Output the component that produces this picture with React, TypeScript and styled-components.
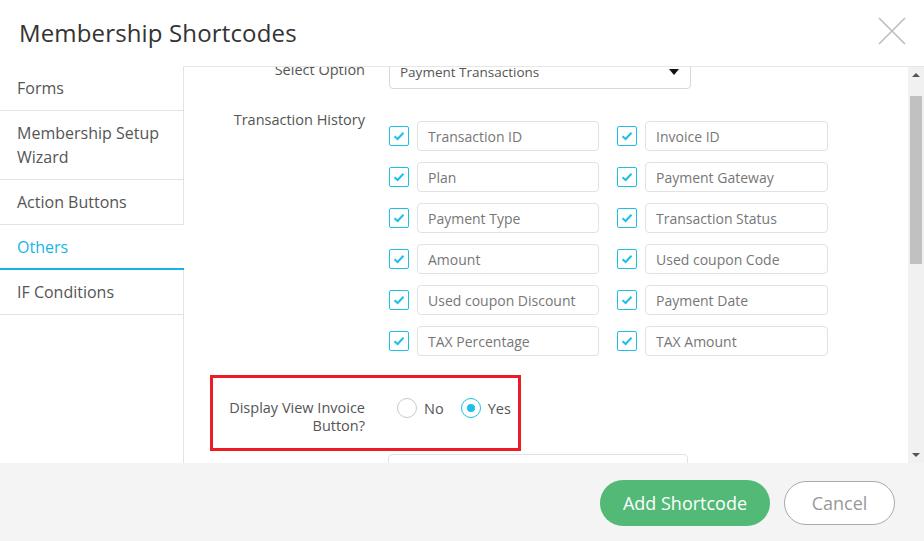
import React from "react";
import styled, { createGlobalStyle } from "styled-components";

const Global = createGlobalStyle`
  html, body { margin: 0; padding: 0; background: #fff; }
  body { font-family: "Open Sans", "Liberation Sans", sans-serif; }
  * { box-sizing: border-box; }
`;

const Modal = styled.div`
  width: 924px;
  height: 541px;
  display: flex;
  flex-direction: column;
  background: #fff;
  overflow: hidden;
`;

const Header = styled.div`
  height: 67px;
  flex: none;
  display: flex;
  align-items: center;
  justify-content: space-between;
  padding: 0 18px 0 19px;
  border-bottom: 1px solid #e6e6e6;
`;

const Title = styled.h1`
  margin: 0 0 2px;
  font-size: 24px;
  font-weight: 400;
  color: #333;
  letter-spacing: 0.15px;
`;

const Close = styled.button`
  width: 28px;
  height: 28px;
  padding: 0;
  border: 0;
  background: none;
  display: flex;
  margin-top: -4px;
`;

const Body = styled.div`
  flex: 1;
  display: flex;
  min-height: 0;
`;

const Sidebar = styled.nav`
  width: 184px;
  flex: none;
  border-right: 1px solid #e3e3e3;
  display: flex;
  flex-direction: column;
`;

const NavItem = styled.div<{ $active?: boolean }>`
  padding: ${(p) => (p.$active ? "10px 17px 9px" : "10px 17px")};
  font-size: 16px;
  line-height: 24px;
  color: ${(p) => (p.$active ? "#16b5e8" : "#555")};
  border-bottom: ${(p) => (p.$active ? "2px solid #16b5e8" : "1px solid #e3e3e3")};
  background: #fff;
  margin-right: ${(p) => (p.$active ? "-1px" : "0")};
  &:first-child {
    margin-top: -1px;
  }
`;

const Content = styled.div`
  flex: 1;
  overflow: hidden;
`;

const Inner = styled.div`
  margin-top: -13px;
  padding-left: 26px;
  display: flex;
  flex-direction: column;
`;

const Row = styled.div<{ $mt?: number }>`
  display: flex;
  align-items: flex-start;
  margin-top: ${(p) => p.$mt ?? 0}px;
  position: relative;
`;

const Label = styled.div<{ $pt?: number }>`
  width: 155px;
  flex: none;
  text-align: right;
  font-size: 14.5px;
  line-height: 20px;
  color: #555;
  padding-top: ${(p) => p.$pt ?? 0}px;
`;

const Controls = styled.div<{ $pt?: number }>`
  margin-left: 24px;
  padding-top: ${(p) => p.$pt ?? 0}px;
`;

const Select = styled.div`
  width: 302px;
  height: 35px;
  border: 1px solid #d3d8dd;
  border-radius: 4px;
  display: flex;
  align-items: center;
  justify-content: space-between;
  padding: 0 11px 0 10px;
  font-size: 13.5px;
  color: #555;
`;

const Caret = styled.span`
  width: 0;
  height: 0;
  border-left: 5px solid transparent;
  border-right: 5px solid transparent;
  border-top: 6px solid #111;
`;

const Grid = styled.div`
  display: grid;
  grid-template-columns: 210px 211px;
  column-gap: 18px;
  row-gap: 11px;
`;

const Cell = styled.div`
  display: flex;
  align-items: center;
  gap: 8px;
`;

const Check = styled.span`
  width: 20px;
  height: 20px;
  flex: none;
  border: 1.5px solid #1cc0e6;
  border-radius: 2px;
  display: flex;
  align-items: center;
  justify-content: center;
`;

const TextBox = styled.div<{ $w?: number }>`
  width: ${(p) => p.$w ?? 182}px;
  height: 30px;
  border: 1px solid #dde3e8;
  border-radius: 4px;
  display: flex;
  align-items: center;
  padding-left: 10px;
  font-size: 14px;
  color: #777;
`;

const TwoLine = styled(Label)`
  line-height: 18px;
`;

const Radios = styled.div`
  display: flex;
  align-items: center;
  margin-left: 32px;
  margin-top: -1px;
`;

const RadioOpt = styled.label`
  display: flex;
  align-items: center;
  gap: 7px;
  font-size: 14.5px;
  color: #555;
  margin-right: 17px;
`;

const RadioCircle = styled.span<{ $on?: boolean }>`
  width: 20px;
  height: 20px;
  border-radius: 50%;
  border: 1px solid ${(p) => (p.$on ? "#1cc0e6" : "#c8c8c8")};
  display: flex;
  align-items: center;
  justify-content: center;
  &::after {
    content: "";
    width: 8px;
    height: 8px;
    border-radius: 50%;
    background: ${(p) => (p.$on ? "#1cc0e6" : "transparent")};
  }
`;

const Highlight = styled.div`
  position: absolute;
  left: 0;
  top: -24px;
  width: 311px;
  height: 76px;
  border: 3px solid #ed1c24;
  pointer-events: none;
`;

const BigBox = styled.div`
  width: 300px;
  height: 34px;
  border: 1px solid #dde3e8;
  border-radius: 4px;
  margin-left: -1px;
`;

const Scrollbar = styled.div`
  width: 16px;
  flex: none;
  background: #f1f1f1;
  display: flex;
  flex-direction: column;
  align-items: center;
`;

const Arrow = styled.span<{ $down?: boolean }>`
  width: 0;
  height: 0;
  margin: 6px 0;
  border-left: 4px solid transparent;
  border-right: 4px solid transparent;
  ${(p) => (p.$down ? "border-top: 4px solid #555;" : "border-bottom: 4px solid #555;")}
`;

const Thumb = styled.div`
  width: 12px;
  height: 168px;
  background: #c1c1c1;
  margin-top: 13px;
`;

const Spacer = styled.div`
  flex: 1;
`;

const Footer = styled.div`
  height: 78px;
  flex: none;
  background: #f4f4f4;
  display: flex;
  align-items: center;
  justify-content: flex-end;
  gap: 14px;
  padding-right: 29px;
  padding-top: 2px;
`;

const Primary = styled.button`
  width: 170px;
  height: 46px;
  border: 0;
  border-radius: 23px;
  background: #52b977;
  color: #fff;
  font-family: inherit;
  font-size: 18px;
  padding: 0;
`;

const Secondary = styled.button`
  width: 111px;
  height: 44px;
  border: 1px solid #aaa;
  border-radius: 22px;
  background: #fff;
  color: #999;
  font-family: inherit;
  font-size: 18px;
  padding: 0;
`;

const items = [
  ["Transaction ID", "Invoice ID"],
  ["Plan", "Payment Gateway"],
  ["Payment Type", "Transaction Status"],
  ["Amount", "Used coupon Code"],
  ["Used coupon Discount", "Payment Date"],
  ["TAX Percentage", "TAX Amount"],
];

const Tick = () => (
  <svg width="12" height="10" viewBox="0 0 12 10">
    <path d="M1.5 5.2 L4.6 8 L10.5 1.8" fill="none" stroke="#1cc0e6" strokeWidth="2" />
  </svg>
);

export default function App() {
  return (
    <Modal>
      <Global />
      <Header>
        <Title>Membership Shortcodes</Title>
        <Close aria-label="close">
          <svg width="28" height="28" viewBox="0 0 28 28">
            <path d="M1 1 L27 27 M27 1 L1 27" stroke="#bdbdbd" strokeWidth="1.6" />
          </svg>
        </Close>
      </Header>
      <Body>
        <Sidebar>
          <NavItem>Forms</NavItem>
          <NavItem>Membership Setup Wizard</NavItem>
          <NavItem>Action Buttons</NavItem>
          <NavItem $active>Others</NavItem>
          <NavItem>IF Conditions</NavItem>
        </Sidebar>
        <Content>
          <Inner>
            <Row>
              <Label $pt={6}>Select Option</Label>
              <Controls>
                <Select>
                  <span>Payment Transactions</span>
                  <Caret />
                </Select>
              </Controls>
            </Row>
            <Row $mt={21}>
              <Label>Transaction History</Label>
              <Controls $pt={11}>
                <Grid>
                  {items.map((row) =>
                    row.map((t, i) => (
                      <Cell key={t}>
                        <Check>
                          <Tick />
                        </Check>
                        <TextBox $w={i === 1 ? 183 : 182}>{t}</TextBox>
                      </Cell>
                    ))
                  )}
                </Grid>
              </Controls>
            </Row>
            <Row $mt={43}>
              <TwoLine>
                Display View Invoice
                <br />
                Button?
              </TwoLine>
              <Radios>
                <RadioOpt>
                  <RadioCircle />
                  No
                </RadioOpt>
                <RadioOpt>
                  <RadioCircle $on />
                  Yes
                </RadioOpt>
              </Radios>
              <Highlight />
            </Row>
            <Row $mt={19}>
              <Label />
              <Controls>
                <BigBox />
              </Controls>
            </Row>
          </Inner>
        </Content>
        <Scrollbar>
          <Arrow />
          <Thumb />
          <Spacer />
          <Arrow $down />
        </Scrollbar>
      </Body>
      <Footer>
        <Primary>Add Shortcode</Primary>
        <Secondary>Cancel</Secondary>
      </Footer>
    </Modal>
  );
}
